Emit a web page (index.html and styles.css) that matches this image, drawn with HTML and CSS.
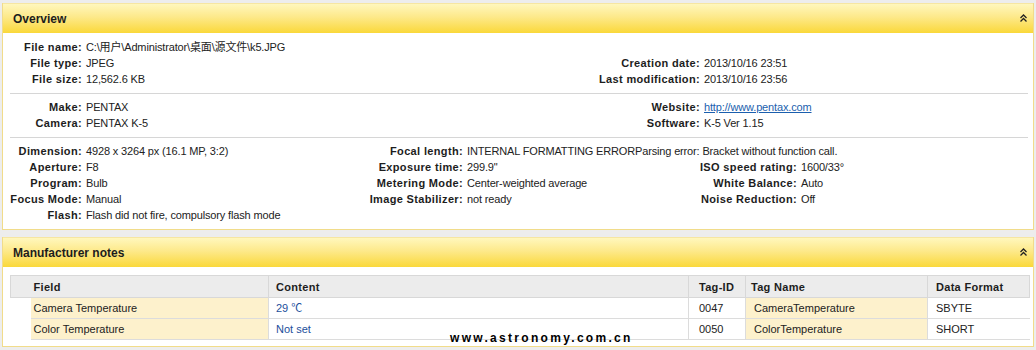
FILE: index.html
```html
<!DOCTYPE html>
<html>
<head>
<meta charset="utf-8">
<link rel="stylesheet" href="styles.css">
</head>
<body>
<div class="page">
  <section class="panel">
    <div class="panel-head">
      <span class="panel-title">Overview</span>
      <svg class="chev" width="7" height="8" viewBox="0 0 7 8"><polyline points="0.5,4 3.5,1 6.5,4" fill="none" stroke="#222" stroke-width="1.3"/><polyline points="0.5,7.5 3.5,4.5 6.5,7.5" fill="none" stroke="#222" stroke-width="1.3"/></svg>
    </div>
    <div class="panel-body overview">
      <div class="grid">
        <span class="lbl">File name:</span><span class="val wide">C:\用户\Administrator\桌面\源文件\k5.JPG</span>
        <span class="lbl">File type:</span><span class="val">JPEG</span><span></span><span></span><span class="lbl">Creation date:</span><span class="val">2013/10/16 23:51</span>
        <span class="lbl">File size:</span><span class="val">12,562.6 KB</span><span></span><span></span><span class="lbl">Last modification:</span><span class="val">2013/10/16 23:56</span>
      </div>
      <div class="sep"></div>
      <div class="grid">
        <span class="lbl">Make:</span><span class="val">PENTAX</span><span></span><span></span><span class="lbl">Website:</span><span class="val"><a href="#" class="link">http://www.pentax.com</a></span>
        <span class="lbl">Camera:</span><span class="val">PENTAX K-5</span><span></span><span></span><span class="lbl">Software:</span><span class="val">K-5 Ver 1.15</span>
      </div>
      <div class="sep"></div>
      <div class="grid grid-exif">
        <span class="lbl">Dimension:</span><span class="val">4928 x 3264 px (16.1 MP, 3:2)</span><span class="lbl">Focal length:</span><span class="val span3">INTERNAL FORMATTING ERRORParsing error: Bracket without function call.</span>
        <span class="lbl">Aperture:</span><span class="val">F8</span><span class="lbl">Exposure time:</span><span class="val">299.9"</span><span class="lbl">ISO speed rating:</span><span class="val">1600/33°</span>
        <span class="lbl">Program:</span><span class="val">Bulb</span><span class="lbl">Metering Mode:</span><span class="val">Center-weighted average</span><span class="lbl">White Balance:</span><span class="val">Auto</span>
        <span class="lbl">Focus Mode:</span><span class="val">Manual</span><span class="lbl">Image Stabilizer:</span><span class="val">not ready</span><span class="lbl">Noise Reduction:</span><span class="val">Off</span>
        <span class="lbl">Flash:</span><span class="val">Flash did not fire, compulsory flash mode</span>
      </div>
    </div>
  </section>

  <section class="panel panel2">
    <div class="panel-head">
      <span class="panel-title">Manufacturer notes</span>
      <svg class="chev" width="7" height="8" viewBox="0 0 7 8"><polyline points="0.5,4 3.5,1 6.5,4" fill="none" stroke="#222" stroke-width="1.3"/><polyline points="0.5,7.5 3.5,4.5 6.5,7.5" fill="none" stroke="#222" stroke-width="1.3"/></svg>
    </div>
    <div class="panel-body notes">
      <table class="tbl">
        <colgroup>
          <col class="c-blank"><col class="c-field"><col class="c-content"><col class="c-id"><col class="c-name"><col class="c-fmt">
        </colgroup>
        <thead>
          <tr><th class="blank"></th><th>Field</th><th>Content</th><th>Tag-ID</th><th>Tag Name</th><th>Data Format</th></tr>
        </thead>
        <tbody>
          <tr><td class="blank"></td><td class="hl">Camera Temperature</td><td class="blue">29 ℃</td><td>0047</td><td class="hl">CameraTemperature</td><td>SBYTE</td></tr>
          <tr><td class="blank"></td><td class="hl">Color Temperature</td><td class="blue">Not set</td><td>0050</td><td class="hl">ColorTemperature</td><td>SHORT</td></tr>
        </tbody>
      </table>
    </div>
    <div class="watermark">www.astronomy.com.cn</div>
  </section>
</div>
</body>
</html>
```

FILE: styles.css
```css
html, body {
  margin: 0;
  padding: 0;
  background: #ededed;
}
body {
  font-family: "Liberation Sans", Arial, "Noto Sans CJK SC", sans-serif;
  font-size: 11px;
  color: #222;
}
.page {
  padding: 3px 2px 0 2px;
  display: flex;
  flex-direction: column;
  gap: 7px;
}
.panel {
  background: #fff;
  border: 1px solid #f1dc8a;
  border-top: 0;
  position: relative;
}
.panel-head {
  height: 30px;
  box-sizing: border-box;
  border-top: 1px solid #f6e6a2;
  background: linear-gradient(#fff7bd 0%, #fde98a 45%, #fad83a 100%);
  display: flex;
  align-items: center;
  justify-content: space-between;
  padding: 0 6px 0 10px;
}
.panel-title {
  font-weight: bold;
  font-size: 12px;
  color: #1d1d1d;
}
.chev {
  display: block;
  margin-top: -1px;
}
.panel-body.overview {
  padding: 6px 5px 6px 7px;
}
.grid {
  display: grid;
  grid-template-columns: 72px 261px 120px 117px 120px 1fr;
  grid-auto-rows: 16px;
  line-height: 16px;
}
.grid.grid-exif {
  grid-template-columns: 72px 261px 120px 217px 117px 1fr;
}
.lbl {
  font-weight: bold;
  text-align: right;
  white-space: nowrap;
  color: #1d1d1d;
  letter-spacing: 0.35px;
}
.val {
  padding-left: 4px;
  white-space: nowrap;
  color: #222;
  letter-spacing: -0.15px;
}
.val.wide {
  grid-column: span 5;
}
.val.span3 {
  grid-column: span 3;
}
.sep {
  height: 1px;
  background: #d6d6d6;
  margin: 6px 0 5px 0;
}
.link {
  color: #1b5fae;
  text-decoration: underline;
}
.panel-body.notes {
  padding: 8px 4px 6px 7px;
}
.tbl {
  width: 1019px;
  border-collapse: collapse;
  table-layout: fixed;
  line-height: 20px;
}
.c-blank { width: 20px; }
.c-field { width: 238px; }
.c-content { width: 420px; }
.c-id { width: 57px; }
.c-name { width: 182px; }
.c-fmt { width: 102px; }
.tbl th {
  background: #ececec;
  font-weight: bold;
  text-align: left;
  height: 21px;
  padding: 0 0 0 7px;
  border-top: 1px solid #d8d8d8;
  border-bottom: 1px solid #d8d8d8;
  border-left: 1px solid #d8d8d8;
  color: #1d1d1d;
  letter-spacing: 0.3px;
}
.tbl th:last-child {
  border-right: 1px solid #d8d8d8;
}
.tbl th.blank {
  border-right: 0;
}
.tbl th.blank + th {
  border-left: 0;
  padding-left: 3px;
}
.tbl td {
  height: 20px;
  padding: 0 0 0 7px;
  border-bottom: 1px solid #dcdcdc;
  border-left: 1px solid #dcdcdc;
  white-space: nowrap;
}
.tbl td.blank {
  border: 0;
  padding: 0;
}
.tbl td.blank + td {
  border-left: 0;
  padding-left: 3px;
}
.tbl td.hl {
  background: #fdf1cc;
}
.tbl th:nth-child(4), .tbl td:nth-child(4) {
  padding-left: 10px;
}
.tbl th:nth-child(5) {
  padding-left: 5px;
}
.tbl td:nth-child(5) {
  padding-left: 8px;
}
.tbl th:nth-child(6), .tbl td:nth-child(6) {
  padding-left: 8px;
}
.tbl td.blue {
  color: #1c4f9c;
}
.watermark {
  position: absolute;
  left: 447px;
  bottom: 1px;
  font-family: "Liberation Sans", Arial, sans-serif;
  font-weight: bold;
  font-size: 12px;
  letter-spacing: 2.3px;
  color: #000;
  line-height: 14px;
}
```
